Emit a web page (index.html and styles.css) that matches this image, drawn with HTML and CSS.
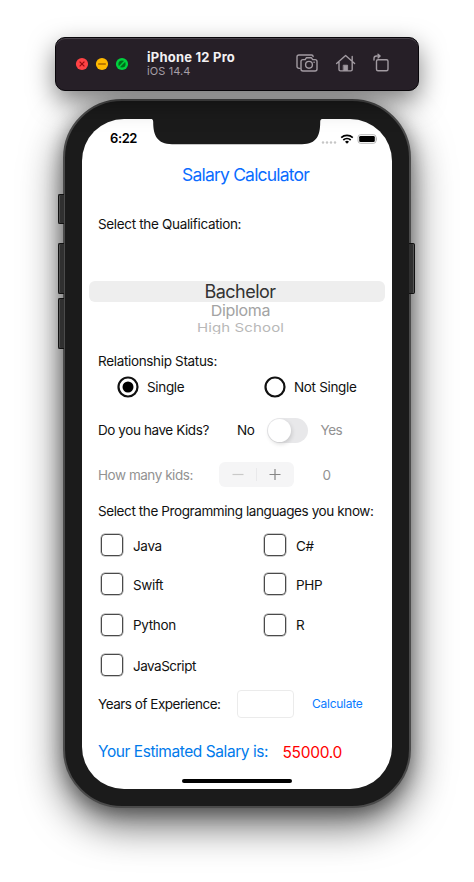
FILE: index.html
```html
<!DOCTYPE html>
<html lang="en">
<head>
<meta charset="utf-8">
<title>Salary Calculator</title>
<link rel="stylesheet" href="styles.css">
</head>
<body>
<header class="toolbar">
  <svg class="lights" width="54" height="14" viewBox="0 0 54 14">
    <circle cx="7" cy="7" r="6.1" fill="#ff4245"/>
    <path d="M4.6 4.6l4.8 4.8M9.4 4.6L4.6 9.4" stroke="#970b10" stroke-width="1.2"/>
    <circle cx="27" cy="7" r="6.1" fill="#ffb900"/>
    <path d="M23.2 7h7.6" stroke="#a16000" stroke-width="1.4"/>
    <circle cx="47" cy="7" r="6.1" fill="#00d13f"/>
    <circle cx="47" cy="7" r="3.6" fill="#006c19"/>
    <path d="M43.800 10.200l6.400-6.400" stroke="#00d13f" stroke-width="1.500"/>
  </svg>
  <div class="device">
    <div class="device-name">iPhone 12 Pro</div>
    <div class="device-os">iOS 14.4</div>
  </div>
  <svg class="tools" width="96" height="22" viewBox="0 0 96 22" fill="none" stroke="#a29ba2" stroke-width="1.4" stroke-linejoin="round" stroke-linecap="round">
    <path d="M4 15.4H3a2 2 0 0 1-2-2V4a2 2 0 0 1 2-2h12.5a1.6 1.6 0 0 1 1.6 1.6"/>
    <path d="M7 6.6h2.2l1.1-1.8h5.2l1.2 1.8H19a2 2 0 0 1 2 2V16a2 2 0 0 1-2 2H7a2 2 0 0 1-2-2V8.600a2 2 0 0 1 2-2z"/>
    <circle cx="13" cy="11.800" r="3.400"/>
    <path d="M18 9.300h.2"/>
    <path d="M40.600 10.600l9-8 9 8M43 9v7.500a1.400 1.400 0 0 0 1.400 1.400h10.400a1.400 1.400 0 0 0 1.400-1.400V9M56.200 3.500v4"/>
    <path d="M47.600 12.200h4v5.300h-4z" fill="#a29ba2" stroke-width=".8"/>
    <rect x="80.500" y="6.800" width="11.500" height="11" rx="1.500"/>
    <path d="M78 7V5.500a2.500 2.500 0 0 1 2.500-2.500h3M82 1.200L84.100 3l-2.100 1.900"/>
  </svg>
</header>

<main class="phone">
  <i class="key mute"></i><i class="key up"></i><i class="key down"></i><i class="key power"></i>
  <div class="screen">
    <svg class="notch" width="176" height="27" viewBox="0 0 176 27">
      <path d="M0 0H176V.8H174C172 .8 171.200 2 171.200 4C171.200 17 168 26.200 153 26.200H23C8 26.200 4.200 17 4.200 4C4.200 2 3.500 .8 1.500 .8H0z" fill="#1b1b1b"/>
    </svg>
    <div class="status">
      <span class="time">6:22</span>
      <svg width="56" height="12" viewBox="0 0 56 12">
        <g fill="#c6c6c6"><circle cx="2" cy="9.500" r="1.200"/><circle cx="6" cy="9.500" r="1.200"/><circle cx="10" cy="9.500" r="1.200"/><circle cx="14" cy="9.500" r="1.200"/></g>
        <g fill="none" stroke="#000" stroke-width="1.700"><path d="M20.200 4.600a8.600 8.600 0 0 1 11.600 0"/><path d="M22.300 7a5.500 5.500 0 0 1 7.400 0"/></g>
        <path d="M26 10.700l-2-2a3 3 0 0 1 4 0z"/>
        <rect x="37" y="1.700" width="18" height="8.600" rx="2.500" fill="none" stroke="#b0b0b0" stroke-width=".9"/>
        <rect x="38.200" y="2.900" width="15.600" height="6.200" rx="1.300"/>
        <path d="M55.600 4.500v3" stroke="#aaa" stroke-width=".8"/>
      </svg>
    </div>
    <h1 class="title"><span>Salary Calculator</span></h1>
    <div class="row qualification"><span>Select the Qualification:</span></div>
    <div class="picker">
      <div class="option selected"><span>Bachelor</span></div>
      <div class="option near"><span>Diploma</span></div>
      <div class="option far"><span>High School</span></div>
    </div>
    <div class="row relation"><span>Relationship Status:</span></div>
    <div class="row radios">
      <svg class="radio" width="22" height="22"><circle cx="11" cy="11" r="9.500" fill="none" stroke="#111" stroke-width="2.200"/><circle cx="11" cy="11" r="5.500"/></svg>
      <span>Single</span>
      <svg class="radio second" width="22" height="22"><circle cx="11" cy="11" r="9.500" fill="none" stroke="#111" stroke-width="2.200"/></svg>
      <span>Not Single</span>
    </div>
    <div class="row kids">
      <span class="c1">Do you have Kids?</span>
      <span class="no">No</span>
      <span class="switch"><i class="knob"></i></span>
      <span class="dim yes">Yes</span>
    </div>
    <div class="row count">
      <span class="c2 dim">How many kids:</span>
      <svg class="stepper" width="75" height="25" viewBox="0 0 75 25"><rect width="75" height="25" rx="6" fill="#f5f5f6"/><path d="M37.500 6v13" stroke="#e9e9eb"/><path d="M13.500 12.500h11" stroke="#c9c9c9" stroke-width="1.200"/><path d="M50.500 12.500h11M56 7v11" stroke="#858585" stroke-width="1.200"/></svg>
      <span class="dim zero">0</span>
    </div>
    <div class="row heading"><span>Select the Programming languages you know:</span></div>
    <div class="row langs l1"><i class="box"></i><span>Java</span><i class="box"></i><span>C#</span></div>
    <div class="row langs l2"><i class="box"></i><span>Swift</span><i class="box"></i><span>PHP</span></div>
    <div class="row langs l3"><i class="box"></i><span>Python</span><i class="box"></i><span>R</span></div>
    <div class="row langs l4"><i class="box"></i><span>JavaScript</span></div>
    <div class="row years"><span class="c3">Years of Experience:</span><span class="field"></span><span class="calc">Calculate</span></div>
    <div class="row result"><span class="c4">Your Estimated Salary is:</span><span class="amount">55000.0</span></div>
    <i class="home"></i>
  </div>
</main>
</body>
</html>
```
FILE: styles.css
```css
* { box-sizing: border-box; }
body {
  margin: 0;
  height: 882px;
  overflow: hidden;
  background: #fff;
  font-family: Inter, "Liberation Sans", sans-serif;
  font-size: 13.5px;
  line-height: 1;
  letter-spacing: -0.33px;
  color: #111;
  white-space: nowrap;
}
svg { display: block; flex: none; }
.toolbar {
  position: relative;
  z-index: 1;
  display: flex;
  align-items: center;
  width: 364px;
  height: 54px;
  margin: 37px 0 0 55px;
  padding-left: 19px;
  border: 1px solid #08060a;
  border-radius: 10px;
  background: #261f27;
  box-shadow: inset 0 1px 0 #48424a, 0 10px 26px rgba(0, 0, 0, .5);
}
.device { width: 149px; margin-left: 18px; color: #f3f1f3; }
.device-name { font-size: 13px; font-weight: 700; letter-spacing: .22px; line-height: 14px; }
.device-os { font-size: 11px; letter-spacing: .1px; line-height: 14px; color: #a69fa7; }
.phone {
  position: relative;
  width: 348px;
  height: 709px;
  margin: 8px 0 0 63px;
  padding: 18px 17px;
  border: 2px solid #4b4b4b;
  border-radius: 59px;
  background: #1b1b1b;
  box-shadow: 0 16px 40px rgba(0, 0, 0, .64), 0 4px 18px rgba(0, 0, 0, .32);
}
.key { position: absolute; left: -7px; width: 6px; border: 1px solid #111; border-right: 0; border-radius: 2px 0 0 2px; background: #303030; box-shadow: inset 1px 0 #555; }
.mute { top: 93px; height: 30px; }
.up { top: 142px; height: 51px; }
.down { top: 197px; height: 51px; }
.power { top: 142px; left: auto; right: -6px; height: 51px; transform: scaleX(-1); }
.screen {
  position: relative;
  width: 310px;
  height: 670px;
  border-radius: 42px;
  background: #fff;
  overflow: hidden;
}
.notch { position: absolute; top: -1px; left: 67px; }
.status { display: flex; align-items: center; justify-content: space-between; height: 36px; padding: 3px 15px 0 28px; }
.time { font-size: 13px; font-weight: 600; letter-spacing: -.4px; color: #000; }
.title { display: flex; align-items: center; height: 38px; margin: 0; padding: 2px 0 0 100px; font-size: 17.5px; font-weight: 400; color: #0a6cff; letter-spacing: -.8px; }
.row { display: flex; align-items: center; padding-left: 16px; }
.row span { flex: none; }
.qualification { height: 62px; padding-top: 2px; }
.picker { height: 94px; padding: 26px 7px 0; text-align: center; }
.option { color: #333; }
.option span { display: inline-block; }
.selected { height: 21px; line-height: 21px; padding-left: 6px; border-radius: 6px; background: #eee; font-size: 18px; letter-spacing: -.5px; }
.near { height: 18px; padding-left: 7px; line-height: 17px; font-size: 16px; color: #a3a3a3; }
.near span { transform: scaleY(.93); }
.far { height: 14px; padding-left: 7px; line-height: 15px; font-size: 15px; letter-spacing: .12px; color: #b8b8b8; overflow: hidden; }
.far span { transform: scaleY(.8); }
.relation { height: 24px; padding-top: 2px; }
.radios { height: 28px; }
.radio { margin: 0 8.5px 0 18.5px; }
.radios span { width: 60px; padding-top: 1px; }
.radio.second { margin-left: 56.5px; }
.kids { height: 58px; }
.c1 { width: 139px; letter-spacing: -.42px; }
.c1, .no, .yes, .c2, .zero { padding-top: 1px; }
.no { width: 30px; }
.switch { width: 41px; height: 25px; padding: 1px; border-radius: 13px; background: #e8e8ea; }
.knob { display: block; width: 23px; height: 23px; border-radius: 50%; background: #fff; box-shadow: 1px 2px 4px rgba(0, 0, 0, .14); }
.yes { margin-left: 12.5px; letter-spacing: -.5px; }
.dim { color: #929292; }
.count { height: 32px; }
.c2 { width: 120.5px; letter-spacing: -.46px; }
.stepper { margin-top: -1px; }
.zero { margin-left: 29px; }
.heading { height: 40px; padding-top: 2px; letter-spacing: -.4px; }
.langs { padding-left: 18px; }
.langs span { width: 130px; padding-top: 2px; letter-spacing: -.35px; }
.l4 span { letter-spacing: -.5px; }
.box { flex: none; width: 22px; height: 22px; margin: -1px 10px 0 1px; border: 1.5px solid #4a4a4a; border-radius: 4px; box-shadow: 0 0 0 .5px #999; }
.l1 { height: 29px; }
.l2 { height: 49px; }
.l3 { height: 32px; }
.l4 { height: 49px; }
.years { height: 27px; }
.c3 { width: 139px; padding-top: 2px; letter-spacing: -.48px; }
.field { width: 57px; height: 28px; border: 1px solid #ebebeb; border-radius: 4px; }
.calc { margin-left: 18px; font-size: 12px; letter-spacing: -.25px; color: #0a7bff; }
.result { height: 66px; font-size: 15.5px; color: #007aeb; }
.c4 { width: 184.5px; padding-top: 3px; letter-spacing: -.44px; }
.amount { padding-top: 6px; letter-spacing: -.3px; color: #f00; }
.home { position: absolute; left: 100px; bottom: 6px; width: 110px; height: 4px; border-radius: 2px; background: #000; }
```
